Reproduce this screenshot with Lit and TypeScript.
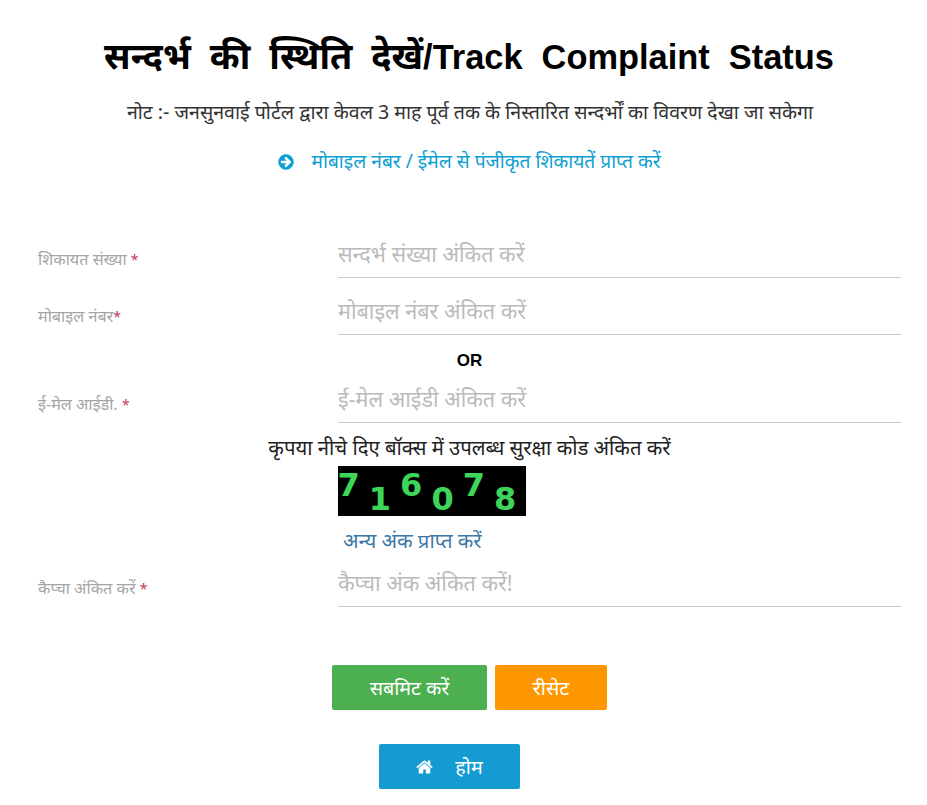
import { LitElement, html, css } from "lit";
import { customElement } from "lit/decorators.js";

const DIGITS: [string, number][] = [
  ["7", 4], ["1", 18], ["6", 4], ["0", 18], ["7", 4], ["8", 18],
];

@customElement("app-root")
export class AppRoot extends LitElement {
  static styles = css`
    :host { display: block; width: 927px; height: 805px; overflow: hidden; background: #fff; font-family: "Noto Sans", "Liberation Sans", sans-serif; color: #222; }
    .page { display: flex; flex-direction: column; }
    h1 { margin: 35px 0 0; text-align: center; font: 700 34.4px/44px "Liberation Sans", "Noto Sans", sans-serif; word-spacing: 9.5px; color: #000; padding-left: 11px; white-space: nowrap; }
    h1 .hi { font-size: 36px; word-spacing: 9px; }
    .note { margin-top: 20px; text-align: center; font-size: 19.6px; line-height: 26px; color: #333; padding-left: 13px; white-space: nowrap; }
    .link { margin-top: 24px; display: flex; justify-content: center; align-items: center; gap: 17px; color: #0f9fd0; font-size: 19.2px; line-height: 26px; padding-left: 12px; }
    .link svg { flex: none; }
    .link span { position: relative; top: -1px; }
    .row { display: flex; margin-left: 38px; width: 863px; }
    .row label { width: 300px; font-size: 16.2px; line-height: 20px; color: #a6a6a6; padding-top: 17px; white-space: nowrap; }
    .req { color: #c9385a; font-size: 14px; }
    .field { flex: 1; height: 45px; border-bottom: 1px solid #ccc; font-size: 21.6px; color: #bbb; line-height: 44px; white-space: nowrap; }
    .r1 { margin-top: 57px; }
    .r2 { margin-top: 11px; }
    .or { margin: 14px 0 4px; text-align: center; font: 700 17px/24px "Liberation Sans", sans-serif; color: #000; padding-left: 12px; }
    .hint { margin-top: 11px; text-align: center; font-size: 20.3px; line-height: 26px; color: #222; padding-left: 12px; white-space: nowrap; }
    .captcha { margin: 6px 0 0 338px; width: 188px; height: 50px; background: #000; display: flex; }
    .digit { flex: none; width: 31.3px; height: 30px; text-align: center; font: 700 32px/30px "DejaVu Sans", sans-serif; color: #3ed55b; }
    .digit:first-child { margin-left: -5px; }
    .other { margin: 11px 0 0 343px; font-size: 20.3px; line-height: 26px; color: #3b78a8; white-space: nowrap; }
    .r4 { margin-top: 8px; }
    .btns { display: flex; margin: 58px 0 0 332px; gap: 8px; }
    .btn { height: 45px; border-radius: 2px; color: #fff; font-size: 19.7px; display: flex; align-items: center; justify-content: center; white-space: nowrap; }
    .green { width: 155px; background: #4caf50; }
    .orange { width: 112px; background: #ff9800; }
    .home { width: 141px; background: #159bd1; gap: 22px; margin: 34px 0 0 379px; }
  `;
  render() {
    return html`<div class="page">
      <h1><span class="hi">सन्दर्भ की स्थिति देखें</span>/Track Complaint Status</h1>
      <div class="note">नोट :- जनसुनवाई पोर्टल द्वारा केवल 3 माह पूर्व तक के निस्तारित सन्दर्भों का विवरण देखा जा सकेगा</div>
      <div class="link"><svg width="16" height="18" viewBox="0 0 1536 1792" fill="#0f9fd0"><path d="M1285 896q0-27-18-45l-91-91-362-362q-18-18-45-18t-45 18l-91 91q-18 18-18 45t18 45l189 189h-502q-26 0-45 19t-19 45v128q0 26 19 45t45 19h502l-189 189q-19 19-19 45t19 45l91 91q18 18 45 18t45-18l362-362 91-91q18-18 18-45zm251 0q0 209-103 385.500t-279.500 279.500-385.500 103-385.500-103-279.500-279.500-103-385.500 103-385.500 279.500-279.500 385.500-103 385.500 103 279.500 279.500 103 385.500z"/></svg><span>मोबाइल नंबर / ईमेल से पंजीकृत शिकायतें प्राप्त करें</span></div>
      <div class="row r1"><label>शिकायत संख्या <span class="req">*</span></label><div class="field">सन्दर्भ संख्या अंकित करें</div></div>
      <div class="row r2"><label>मोबाइल नंबर<span class="req">*</span></label><div class="field">मोबाइल नंबर अंकित करें</div></div>
      <div class="or">OR</div>
      <div class="row"><label>ई-मेल आईडी. <span class="req">*</span></label><div class="field">ई-मेल आईडी अंकित करें</div></div>
      <div class="hint">कृपया नीचे दिए बॉक्स में उपलब्ध सुरक्षा कोड अंकित करें</div>
      <div class="captcha">${DIGITS.map(([d, y]) => html`<span class="digit" style="margin-top:${y}px">${d}</span>`)}</div>
      <div class="other">अन्य अंक प्राप्त करें</div>
      <div class="row r4"><label>कैप्चा अंकित करें <span class="req">*</span></label><div class="field">कैप्चा अंक अंकित करें!</div></div>
      <div class="btns"><div class="btn green">सबमिट करें</div><div class="btn orange">रीसेट</div></div>
      <div class="btn home"><svg width="17" height="18" viewBox="0 0 1664 1792" fill="#fff"><path d="M1408 992v480q0 26-19 45t-45 19h-384v-384h-256v384h-384q-26 0-45-19t-19-45v-480q0-1 .5-3t.5-3l575-474 575 474q1 2 1 6zm223-69l-62 74q-8 9-21 11h-3q-13 0-21-7l-692-577-692 577q-12 8-24 7-13-2-21-11l-62-74q-8-10-7-23.500t11-21.500l719-599q32-26 76-26t76 26l244 204v-195q0-14 9-23t23-9h192q14 0 23 9t9 23v408l219 182q10 8 11 21.500t-7 23.500z"/></svg><span>होम</span></div>
    </div>`;
  }
}
